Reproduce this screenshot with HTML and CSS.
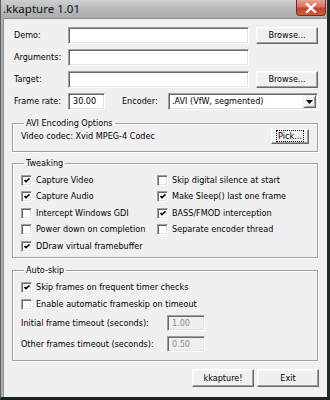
FILE: index.html
```html
<!DOCTYPE html>
<html>
<head>
<meta charset="utf-8">
<link rel="stylesheet" href="styles.css">
</head>
<body>
<div class="window">
  <div class="titlebar">
    <span class="title">.kkapture 1.01</span>
    <div class="close">
      <svg width="12" height="10" viewBox="0 0 12 10"><path d="M2 1 L10 9 M10 1 L2 9" stroke="#fff" stroke-width="2.4" stroke-linecap="square"/></svg>
    </div>
  </div>
  <div class="client">
    <div class="top">
      <span class="lbl">Demo:</span><div class="edit"></div><button class="btn">Browse...</button>
      <span class="lbl">Arguments:</span><div class="edit"></div><span></span>
      <span class="lbl">Target:</span><div class="edit"></div><button class="btn">Browse...</button>
    </div>
    <div class="frame-row">
      <span class="lbl">Frame rate:</span>
      <div class="edit fps">30.00</div>
      <span class="lbl enc">Encoder:</span>
      <div class="combo"><span>.AVI (VfW, segmented)</span><div class="drop"><svg width="7" height="4" viewBox="0 0 7 4"><path d="M0 0 H7 L3.5 4 Z" fill="#000"/></svg></div></div>
    </div>
    <fieldset class="group avi">
      <legend>AVI Encoding Options</legend>
      <div class="codec-row">
        <span>Video codec: Xvid MPEG-4 Codec</span>
        <button class="btn pick"><span class="focus">Pick...</span></button>
      </div>
    </fieldset>
    <fieldset class="group tweak">
      <legend>Tweaking</legend>
      <div class="grid2">
        <label class="cb"><span class="box on"></span>Capture Video</label>
        <label class="cb"><span class="box"></span>Skip digital silence at start</label>
        <label class="cb"><span class="box on"></span>Capture Audio</label>
        <label class="cb"><span class="box on"></span>Make Sleep() last one frame</label>
        <label class="cb"><span class="box"></span>Intercept Windows GDI</label>
        <label class="cb"><span class="box on"></span>BASS/FMOD interception</label>
        <label class="cb"><span class="box"></span>Power down on completion</label>
        <label class="cb"><span class="box"></span>Separate encoder thread</label>
        <label class="cb"><span class="box on"></span>DDraw virtual framebuffer</label>
      </div>
    </fieldset>
    <fieldset class="group skip">
      <legend>Auto-skip</legend>
      <label class="cb"><span class="box on"></span>Skip frames on frequent timer checks</label>
      <label class="cb"><span class="box"></span>Enable automatic frameskip on timeout</label>
      <div class="to-row first"><span>Initial frame timeout (seconds):</span><div class="edit dis">1.00</div></div>
      <div class="to-row"><span>Other frames timeout (seconds):</span><div class="edit dis">0.50</div></div>
    </fieldset>
    <div class="actions">
      <button class="btn big">kkapture!</button>
      <button class="btn big">Exit</button>
    </div>
  </div>
</div>
</body>
</html>
```
FILE: styles.css
```css
html, body { margin: 0; padding: 0; }
body { background: #1c2626; width: 330px; height: 400px; overflow: hidden; }
.window {
  width: 330px; height: 400px; box-sizing: border-box;
  background: #aeb0b1;
  border-left: 1px solid #5a5e60;
  border-right: 3px solid #1f2a2b;
  border-bottom: 3px solid #1a2424;
  display: flex; flex-direction: column;
  font-family: "DejaVu Sans Condensed", "DejaVu Sans", sans-serif;
  font-stretch: condensed;
  font-size: 9px; line-height: 11px; color: #000;
}
.titlebar {
  height: 18px; flex: none; position: relative;
  background: linear-gradient(180deg, #cfd0d1 0%, #b9bbbc 45%, #a9abac 100%);
  display: flex; align-items: center;
}
.title { font-family: "Noto Sans", sans-serif; font-size: 11.5px; margin-left: 2px; margin-top: -2px; color: #111; }
.close {
  position: absolute; right: 1px; top: 0; width: 30px; height: 16px;
  box-sizing: border-box; border: 1px solid #7a2a20; border-top: none;
  border-radius: 0 0 4px 4px;
  background: linear-gradient(180deg, #e9a193 0%, #d8725f 45%, #c2432c 55%, #d05a3e 100%);
  display: flex; align-items: center; justify-content: center;
}
.client {
  flex: 1; background: #f0f0f0; margin-left: 2px;
  border-top: 1px solid #8c8e90; border-left: 1px solid #8c8e90;
  padding: 8px 8px 0 10px; box-sizing: border-box;
  display: flex; flex-direction: column;
}
.top { display: grid; grid-template-columns: 47px 181px 62px; grid-auto-rows: 17px; column-gap: 7px; row-gap: 5px; align-items: center; }
.lbl { white-space: nowrap; }
.edit {
  height: 17px; box-sizing: border-box; background: #fff;
  border-top: 1px solid #a0a0a0; border-left: 1px solid #a0a0a0;
  border-right: 1px solid #fff; border-bottom: 1px solid #fff;
  box-shadow: inset 1px 1px 0 #696969, inset -1px -1px 0 #e3e3e3;
  padding: 2px 0 0 4px; line-height: 11px;
}
.btn {
  font: inherit; color: #000; background: #f0f0f0; margin: 0; padding: 0;
  height: 17px; box-sizing: border-box;
  border-top: 1px solid #fff; border-left: 1px solid #fff;
  border-right: 1px solid #696969; border-bottom: 1px solid #696969;
  box-shadow: inset -1px -1px 0 #a0a0a0, inset 1px 1px 0 #f8f8f8;
}
.frame-row { display: flex; align-items: center; margin-top: 5px; height: 17px; }
.frame-row .lbl:first-child { width: 54px; }
.fps { width: 37px; }
.enc { margin-left: 17px; width: 46px; }
.combo {
  width: 150px; height: 17px; box-sizing: border-box; background: #fff;
  border-top: 1px solid #a0a0a0; border-left: 1px solid #a0a0a0;
  border-right: 1px solid #fff; border-bottom: 1px solid #fff;
  box-shadow: inset 1px 1px 0 #696969, inset -1px -1px 0 #e3e3e3;
  display: flex; align-items: center; justify-content: space-between; padding: 0 1px 0 3px;
}
.drop {
  width: 13px; height: 13px; box-sizing: border-box; background: #f0f0f0;
  border-top: 1px solid #f0f0f0; border-left: 1px solid #f0f0f0;
  border-right: 1px solid #696969; border-bottom: 1px solid #696969;
  box-shadow: inset 1px 1px 0 #fff, inset -1px -1px 0 #a0a0a0;
  display: flex; align-items: center; justify-content: center;
}
.group {
  margin: 0 0 0 -2px; padding: 0 8px; width: 306px; box-sizing: border-box;
  border: 1px solid #a0a0a0; box-shadow: inset 1px 1px 0 #fff, 1px 1px 0 #fff;
}
.group legend { padding: 0 2px; margin-left: 3px; line-height: 11px; height: 11px; }
.avi { margin-top: 8px; padding-bottom: 8px; }
.codec-row { display: flex; justify-content: space-between; align-items: center; height: 14px; }
.pick { height: 15px; width: 38px; }
.focus { outline: 1px dotted #000; outline-offset: 0; padding: 0 1px; }
.tweak { margin-top: 6px; padding-top: 3px; padding-bottom: 2px; }
.grid2 { display: grid; grid-template-columns: 136px 1fr; grid-auto-rows: 16.5px; }
.cb { display: flex; align-items: center; white-space: nowrap; }
.box {
  width: 11px; height: 11px; box-sizing: border-box; margin-right: 4px; flex: none;
  background: #fff;
  border-top: 1px solid #a0a0a0; border-left: 1px solid #a0a0a0;
  border-right: 1px solid #fff; border-bottom: 1px solid #fff;
  box-shadow: inset 1px 1px 0 #696969, inset -1px -1px 0 #e3e3e3;
  position: relative;
}
.box.on::after {
  content: ""; position: absolute; left: 2px; top: 2px; width: 6px; height: 5px;
  background: no-repeat center/6px 5px url("data:image/svg+xml,%3Csvg xmlns='http://www.w3.org/2000/svg' width='6' height='5' viewBox='0 0 6 5'%3E%3Cpath d='M0.5 2 L2 3.6 L5.5 0.4' stroke='%23000' stroke-width='1.6' fill='none'/%3E%3C/svg%3E");
}
.skip { margin-top: 7px; padding-top: 3px; padding-bottom: 8px; }
.skip .cb { height: 17px; }
.to-row { display: flex; align-items: center; justify-content: space-between; width: 184px; height: 16px; margin-top: 5px; }
.to-row.first { margin-top: 2.5px; }
.to-row .edit { width: 38px; height: 16px; }
.edit.dis { background: #f0f0f0; color: #8a8a8a; }
.actions { display: flex; justify-content: flex-end; gap: 3px; margin-top: 8px; }
.big { width: 62px; height: 18px; }
```
